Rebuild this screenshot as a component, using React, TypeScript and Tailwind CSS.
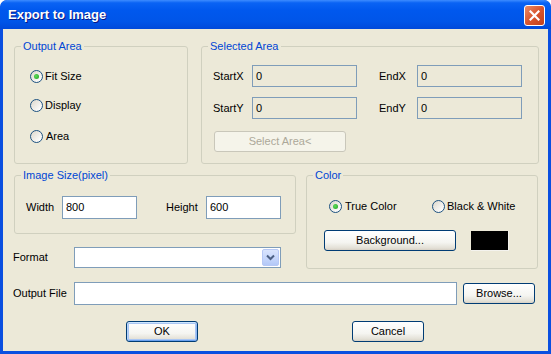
import React from "react";

const font = "font-['Liberation_Sans',Arial,sans-serif]";

const Radio: React.FC<{ checked?: boolean }> = ({ checked }) => (
  <span className="w-[13px] h-[13px] shrink-0 rounded-full border border-[#1C5180] bg-[linear-gradient(135deg,#DCD7CB_0%,#FFFFFF_90%)] flex items-center justify-center">
    {checked && (
      <span className="w-[5px] h-[5px] rounded-full bg-[radial-gradient(circle_at_40%_40%,#5EDC5A,#21A121)]" />
    )}
  </span>
);

const Legend: React.FC<{ text: string }> = ({ text }) => (
  <span className="block w-fit -mt-[7px] ml-[6px] px-[2px] h-[13px] leading-[13px] bg-[#ECE9D8] text-[#0046D5]">
    {text}
  </span>
);

const XPButton: React.FC<{
  label: string;
  className?: string;
  disabled?: boolean;
  isDefault?: boolean;
}> = ({ label, className = "", disabled, isDefault }) => {
  if (disabled) {
    return (
      <button
        className={`h-[21px] rounded-[3px] border border-[#C9C7BA] bg-[#F5F4EA] text-[11px] text-[#ACA899] ${className}`}
      >
        {label}
      </button>
    );
  }
  return (
    <button
      className={`h-[21px] rounded-[3px] border border-[#003C74] bg-[linear-gradient(180deg,#FFFFFF_0%,#F5F5F1_60%,#E3E0D6_90%,#D6D0C5_100%)] text-[11px] text-black ${
        isDefault ? "shadow-[inset_0_1px_0_#CEE7FF,inset_1px_0_0_#B5D2F8,inset_-1px_0_0_#8FB7F2,inset_0_-1px_0_#69A1EF,inset_0_0_0_2px_#A9C6F4]" : ""
      } ${className}`}
    >
      {label}
    </button>
  );
};

const Field: React.FC<{ value?: string; className?: string; readOnly?: boolean }> = ({
  value = "",
  className = "",
  readOnly,
}) => (
  <div
    className={`border border-[#7F9DB9] flex items-center pl-[3px] text-[11px] text-black ${
      readOnly ? "bg-[#ECE9D8]" : "bg-white"
    } ${className}`}
  >
    {value}
  </div>
);

export default function App() {
  return (
    <div
      className={`${font} w-[551px] h-[354px] flex flex-col rounded-t-[7px] bg-[#0A4FE0] text-[11px] text-black overflow-hidden`}
    >
      {/* title bar */}
      <div className="h-[29px] shrink-0 flex items-center pl-[8px] pr-[6px] rounded-t-[7px] bg-[linear-gradient(180deg,#3D8CFF_0%,#0A63F4_10%,#0058EE_35%,#0055E8_75%,#0049DA_100%)]">
        <span className="text-[13px] font-bold text-white [text-shadow:1px_1px_#0A1883] pt-[1px]">
          Export to Image
        </span>
        <div className="ml-auto mt-[1px] w-[21px] h-[21px] rounded-[3px] border border-white bg-[linear-gradient(135deg,#E98C68_0%,#D9552E_50%,#C0401C_100%)] flex items-center justify-center">
          <svg width="11" height="11" viewBox="0 0 11 11">
            <path d="M1.5 1.5 L9.5 9.5 M9.5 1.5 L1.5 9.5" stroke="white" strokeWidth="2.2" strokeLinecap="square" />
          </svg>
        </div>
      </div>

      {/* client area */}
      <div className="flex-1 mx-[3px] mb-[3px] bg-[#ECE9D8] flex flex-col">
        {/* row 1 */}
        <div className="flex mt-[17px] pl-[11px]">
          <div className="w-[174px] h-[118px] border border-[#D0D0BF] rounded-[3px]">
            <Legend text="Output Area" />
            <div className="flex items-center gap-[2px] mt-[17px] pl-[15px] h-[13px]">
              <Radio checked />
              <span>Fit Size</span>
            </div>
            <div className="flex items-center gap-[2px] mt-[16px] pl-[15px] h-[13px]">
              <Radio />
              <span>Display</span>
            </div>
            <div className="flex items-center gap-[3px] mt-[18px] pl-[15px] h-[13px]">
              <Radio />
              <span>Area</span>
            </div>
          </div>

          <div className="ml-[13px] w-[338px] h-[118px] border border-[#D0D0BF] rounded-[3px]">
            <Legend text="Selected Area" />
            <div className="flex items-center mt-[12px] pl-[11px]">
              <span className="w-[39px]">StartX</span>
              <Field value="0" readOnly className="w-[105px] h-[22px]" />
              <span className="ml-[22px] w-[38px]">EndX</span>
              <Field value="0" readOnly className="w-[105px] h-[22px]" />
            </div>
            <div className="flex items-center mt-[10px] pl-[11px]">
              <span className="w-[39px]">StartY</span>
              <Field value="0" readOnly className="w-[105px] h-[22px]" />
              <span className="ml-[22px] w-[38px]">EndY</span>
              <Field value="0" readOnly className="w-[105px] h-[22px]" />
            </div>
            <div className="mt-[12px] pl-[12px]">
              <XPButton label="Select Area<" disabled className="w-[132px]" />
            </div>
          </div>
        </div>

        {/* row 2 */}
        <div className="flex mt-[11px] pl-[11px]">
          <div className="flex flex-col">
            <div className="w-[282px] h-[59px] border border-[#D0D0BF] rounded-[3px]">
              <Legend text="Image Size(pixel)" />
              <div className="flex items-center mt-[14px] pl-[11px]">
                <span className="w-[36px]">Width</span>
                <Field value="800" className="w-[75px] h-[23px]" />
                <span className="ml-[29px] w-[40px]">Height</span>
                <Field value="600" className="w-[75px] h-[23px]" />
              </div>
            </div>
            <div className="flex items-center mt-[13px] -ml-[1px]">
              <span className="w-[61px]">Format</span>
              <div className="w-[207px] h-[21px] border border-[#7F9DB9] bg-white flex items-center justify-end pr-[1px]">
                <div className="w-[17px] h-[17px] rounded-[2px] border border-[#B6C8F5] bg-[linear-gradient(180deg,#D9E4FD_0%,#C4D5FB_60%,#B3C8F7_100%)] flex items-center justify-center">
                  <svg width="9" height="7" viewBox="0 0 9 7">
                    <path d="M1 1.5 L4.5 5 L8 1.5" stroke="#4D6185" strokeWidth="2" fill="none" />
                  </svg>
                </div>
              </div>
            </div>
          </div>

          <div className="ml-[10px] w-[232px] h-[94px] border border-[#D0D0BF] rounded-[3px]">
            <Legend text="Color" />
            <div className="flex items-center mt-[18px] pl-[22px] h-[13px]">
              <div className="flex items-center gap-[3px] w-[103px]">
                <Radio checked />
                <span>True Color</span>
              </div>
              <div className="flex items-center gap-[2px]">
                <Radio />
                <span>Black &amp; White</span>
              </div>
            </div>
            <div className="flex items-start mt-[17px] pl-[17px]">
              <XPButton label="Background..." className="w-[132px]" />
              <div className="ml-[15px] mt-[1px] w-[38px] h-[20px] bg-black border-r border-b border-[#F4F3EE]" />
            </div>
          </div>
        </div>

        {/* row 3 */}
        <div className="flex items-center mt-[13px] pl-[10px]">
          <span className="w-[61px]">Output File</span>
          <Field className="w-[383px] h-[23px]" />
          <XPButton label="Browse..." className="ml-[6px] w-[72px]" />
        </div>

        {/* row 4 */}
        <div className="flex mt-[16px] pl-[123px]">
          <XPButton label="OK" isDefault className="w-[72px]" />
          <XPButton label="Cancel" className="ml-[154px] w-[72px]" />
        </div>
      </div>
    </div>
  );
}
